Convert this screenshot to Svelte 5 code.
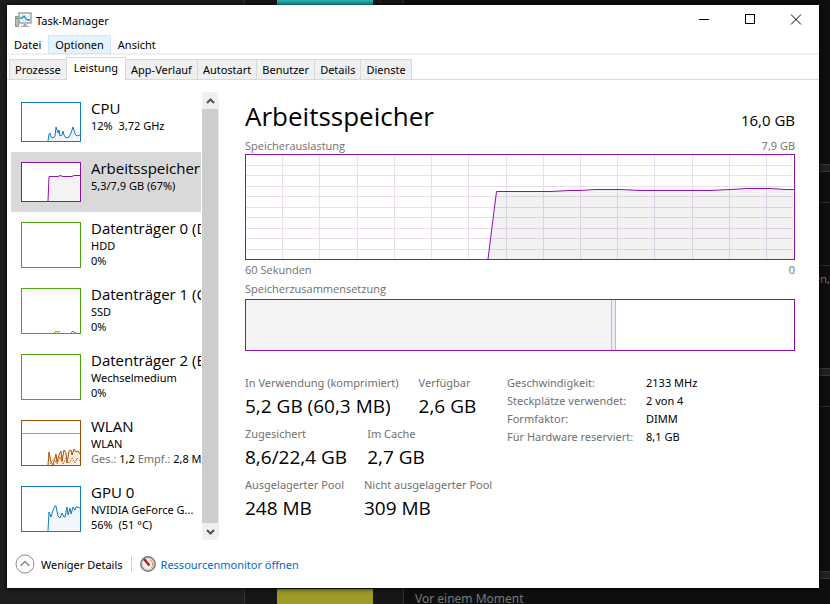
<script>
  const menus = ['Datei', 'Optionen', 'Ansicht'];
  const tabs = ['Prozesse', 'Leistung', 'App-Verlauf', 'Autostart', 'Benutzer', 'Details', 'Dienste'];
  let openMenu = $state('Optionen');
  let activeTab = $state('Leistung');
  let selected = $state('mem');

  const devices = [
    { id: 'cpu', name: 'CPU', lines: ['12%  3,72 GHz'], color: '#117dbb', fill: '#f1f6fa', h: 40,
      plot: 'M27 39L28 32L29 31L30 35L32 36L34 34L35 25L37 31L38 28L39 34L41 33L42 29L43 33L45 36L48 35L50 31L52 25L54 32L56 34L59 33' },
    { id: 'mem', name: 'Arbeitsspeicher', lines: ['5,3/7,9 GB (67%)'], color: '#8b12ae', fill: '#f4f2f4', h: 40,
      plot: 'M27 39L28 14.5H37L39 13.5L42 14.5H51L53 13.5H59' },
    { id: 'd0', name: 'Datenträger 0 (D:)', lines: ['HDD', '0%'], color: '#4da60c', fill: '#eff7e9', h: 46, plot: '' },
    { id: 'd1', name: 'Datenträger 1 (C:)', lines: ['SSD', '0%'], color: '#4da60c', fill: '#4da60c', h: 46,
      plot: 'M33 45L35 43L36 44H38L39 43M50 45L52 43L53 44L55 45' },
    { id: 'd2', name: 'Datenträger 2 (E:)', lines: ['Wechselmedium', '0%'], color: '#4da60c', fill: '#eff7e9', h: 46, plot: '' },
    { id: 'wlan', name: 'WLAN', lines: ['WLAN'], net: true, color: '#a74f01', fill: '#fdf1e9', h: 46,
      plot: 'M27 45L28 32L30 42L32 45L35 34L36 42L38 35L40 31L41 41L43 30L45 33L46 43L48 31L50 30L51 35L53 29L55 32L57 31L59 34' },
    { id: 'gpu', name: 'GPU 0', lines: ['NVIDIA GeForce G...', '56%  (51 °C)'], color: '#117dbb', fill: '#f1f6fa', h: 46,
      plot: 'M27 45L28 26L30 31L32 24L34 20L35 20L37 30L39 32L41 27L43 31L44 31L46 21L47 29L49 22L50 28L52 21L54 24L55 21L57 21L59 22' }
  ];

  const rows = [
    [['In Verwendung (komprimiert)', '5,2 GB (60,3 MB)'], ['Verfügbar', '2,6 GB']],
    [['Zugesichert', '8,6/22,4 GB'], ['Im Cache', '2,7 GB']],
    [['Ausgelagerter Pool', '248 MB'], ['Nicht ausgelagerter Pool', '309 MB']]
  ];
  const details = [
    ['Geschwindigkeit:', '2133 MHz'],
    ['Steckplätze verwendet:', '2 von 4'],
    ['Formfaktor:', 'DIMM'],
    ['Für Hardware reserviert:', '8,1 GB']
  ];
  const gridX = [37, 74, 112, 149, 186, 223, 261, 298, 335, 372, 409, 447, 484, 521];
  const gridY = [11, 21, 32, 42, 53, 63, 74, 84, 95];
</script>

<div class="desktop">
  <div class="backdrop" aria-hidden="true">
    <div class="pane"></div>
    <div class="swatch-column"><i class="teal"></i><i class="olive"></i></div>
    <div class="feed">
      <svg class="corner" width="10" height="5"><path d="M0 0L4 5" stroke="#333" /></svg>
      <span class="age">Vor einem Moment</span>
      <span class="cut">en,</span>
      <i class="band" style:top="164px"></i>
      <i class="rule" style:top="202px"></i>
      <i class="rule" style:top="265px"></i>
      <i class="band" style:top="368px"></i>
      <i class="rule" style:top="406px"></i>
      <i class="band" style:top="571px"></i>
    </div>
  </div>

  <div class="window">
    <header class="titlebar">
      <svg width="17" height="16" viewBox="0 0 17 16">
        <path d="M0.5 4.5H3.5V14.5H0.5Z" fill="#b9bdbf" stroke="#8e9295" />
        <path d="M1 6.5H3" stroke="#4fae3c" />
        <rect x="4" y="1" width="12" height="10" fill="#e9f4fa" stroke="#a2a6a8" stroke-width="1.5" />
        <path d="M5 6H7L9 4L11 7L13 8H15" fill="none" stroke="#1687c9" stroke-width="1.3" />
        <path d="M8.500 12H11.500V14H14V15H6V14H8.500Z" fill="#a2a6a8" />
      </svg>
      <h1>Task-Manager</h1>
      <div class="controls">
        <button aria-label="Minimieren"><svg width="12" height="12"><path d="M1 5.500H11" stroke="#000" /></svg></button>
        <button aria-label="Maximieren"><svg width="12" height="12"><rect x="1.5" y="0.5" width="9" height="9" fill="none" stroke="#000" /></svg></button>
        <button aria-label="Schließen"><svg width="12" height="12"><path d="M1 0.500L11 10.500M11 0.500L1 10.500" stroke="#000" /></svg></button>
      </div>
    </header>

    <nav class="menubar">
      {#each menus as m}
        <button class:open={openMenu === m} onclick={() => (openMenu = m)}>{m}</button>
      {/each}
    </nav>

    <div class="tabs" role="tablist">
      {#each tabs as t}
        <button role="tab" aria-selected={activeTab === t} class:active={activeTab === t} onclick={() => (activeTab = t)}>{t}</button>
      {/each}
    </div>

    <div class="body">
      <aside>
        <div class="devices">
          {#each devices as d}
            <button class="device" class:selected={selected === d.id} onclick={() => (selected = d.id)}>
              <svg class="thumb" width="60" height={d.h} viewBox="0 0 60 {d.h}">
                <rect x="0.5" y="0.5" width="59" height={d.h - 1} fill="#fff" />
                {#if d.plot}
                  {#if d.id !== 'd1'}<path d="{d.plot}V{d.h - 1}H27Z" fill={d.fill} />{/if}
                  <path d={d.plot} fill="none" stroke={d.color} />
                {/if}
                {#if d.net}
                  <path d="M1 13.500H59" stroke={d.color} opacity="0.6" />
                  <path d="M29 44L33 39L36 44L39 37L42 44L45 38L48 43L51 38L54 43L56 38L59 41" fill="none" stroke="#d9641c" stroke-dasharray="2 1" />
                {/if}
                <rect x="0.5" y="0.5" width="59" height={d.h - 1} fill="none" stroke={d.color} />
              </svg>
              <span class="info">
                <span class="name">{d.name}</span>
                {#each d.lines as l}<span class="line">{l}</span>{/each}
                {#if d.net}
                  <span class="line"><em>Ges.:</em> 1,2 <em>Empf.:</em> 2,8 MBit/s</span>
                {/if}
              </span>
            </button>
          {/each}
        </div>
        <div class="scrollbar">
          <button aria-label="Nach oben"><svg width="9" height="8"><path d="M1 6L4.500 2.500L8 6" /></svg></button>
          <div class="handle"></div>
          <button aria-label="Nach unten"><svg width="9" height="8"><path d="M1 2L4.500 5.500L8 2" /></svg></button>
        </div>
        <div class="splitter"></div>
      </aside>

      <main>
        <div class="head">
          <h2>Arbeitsspeicher</h2>
          <span>16,0 GB</span>
        </div>
        <div class="caption"><span>Speicherauslastung</span><span>7,9 GB</span></div>
        <svg class="chart" viewBox="0 0 550 106" preserveAspectRatio="none">
          <rect x="0" y="0" width="550" height="106" fill="#fff" />
          {#each gridX as x}<path d="M{x + 0.5} 1V105" stroke="#ecdcf2" />{/each}
          {#each gridY as y}<path d="M1 {y + 0.5}H548" stroke="#ecdcf2" />{/each}
          <path d="M243 105L251.500 37.500H305L325 36.500H335L350 35.500H375L395 36.500H465L485 35.500L503 34.500H525L540 35.500H549V105Z" fill="#000" fill-opacity="0.05" />
          <path d="M243 105L251.500 37.500H305L325 36.500H335L350 35.500H375L395 36.500H465L485 35.500L503 34.500H525L540 35.500H549" fill="none" stroke="#8b12ae" />
          <rect x="0.5" y="0.5" width="549" height="105" fill="none" stroke="#8b12ae" />
        </svg>
        <div class="caption"><span>60 Sekunden</span><span>0</span></div>
        <div class="caption second"><span>Speicherzusammensetzung</span></div>
        <div class="composition"><i class="used"></i><i class="modified"></i></div>

        <div class="stats">
          <div class="primary">
            {#each rows as r}
              <dl>
                {#each r as [k, v]}
                  <div><dt>{k}</dt><dd>{v}</dd></div>
                {/each}
              </dl>
            {/each}
          </div>
          <table>
            <tbody>
              {#each details as [k, v]}
                <tr><th scope="row">{k}</th><td>{v}</td></tr>
              {/each}
            </tbody>
          </table>
        </div>
      </main>
    </div>

    <footer>
      <button class="less">
        <svg width="20" height="20"><circle cx="10" cy="10" r="9" fill="#fff" stroke="#8c8c8c" /><path d="M5.500 12L10 7.500L14.500 12" fill="none" stroke="#8c8c8c" stroke-width="1.5" /></svg>
        Weniger Details
      </button>
      <a href="#resmon">
        <svg width="16" height="16" viewBox="0 0 16 16">
          <circle cx="8" cy="8" r="7.200" fill="#f3efe8" stroke="#777" stroke-width="1.500" />
          <circle cx="8" cy="8" r="5.500" fill="#fbfaf7" stroke="#c9c4bb" />
          <path d="M10 4A4.500 4.500 0 0 1 11 11.500" fill="none" stroke="#d98a5c" />
          <path d="M4 3L9.500 9.500" stroke="#c9141a" stroke-width="2.500" />
        </svg>
        Ressourcenmonitor öffnen
      </a>
    </footer>
  </div>
</div>

<style>
  :global(body) { margin: 0; background: #1f1f1f; }
  * { box-sizing: border-box; }
  .desktop {
    position: relative;
    display: flex;
    height: 100vh;
    padding: 5px 11px 16px 7px;
    overflow: hidden;
    font: 11px/15px "Noto Sans", "Open Sans", sans-serif;
    color: #000;
  }
  button { font: inherit; color: inherit; border: 0; padding: 0; margin: 0; background: none; }
  h1, h2, dl, dd { margin: 0; font-weight: 400; }

  .backdrop { position: absolute; inset: 0; display: flex; color: #777; }
  .pane { width: 245px; border-right: 1px solid #333; background: #1f1f1f; }
  .swatch-column { width: 158px; padding: 0 30px 0 32px; background: #171717; display: flex; flex-direction: column; justify-content: space-between; }
  .swatch-column i { height: 15px; }
  .teal { background: #2bb9b9; }
  .olive { background: #9c9c27; }
  .feed { position: relative; flex: 1; background: #0f0f0f; border-left: 1px solid #2b2b2b; }
  .corner { position: absolute; left: -25px; top: 0; }
  .age { position: absolute; left: 11px; bottom: -2px; font-size: 12px; }
  .cut { position: absolute; right: 0; top: 271px; }
  .band, .rule { position: absolute; right: 0; width: 11px; height: 1px; background: #2b2b2b; }
  .band { height: 8px; background: #222; border: solid #363636; border-width: 1px 0; }

  .window { position: relative; flex: 1; min-width: 0; display: flex; flex-direction: column; background: #fff; box-shadow: 0 0 6px #000; }
  .titlebar { display: flex; align-items: center; height: 30px; padding-left: 8px; gap: 4px; }
  h1 { flex: 1; font-size: 11px; }
  .controls { display: flex; height: 28px; }
  .controls button { width: 46px; display: grid; place-items: center; }
  .menubar { display: flex; height: 20px; border-bottom: 2px solid #f0f0f0; }
  .menubar button { height: 19px; padding: 0 6px; border: 1px solid transparent; }
  .menubar .open { background: #e5f3ff; border-color: #cce8ff; }
  .tabs { display: flex; align-items: flex-end; height: 25px; padding-left: 2px; border-bottom: 1px solid #d9d9d9; }
  .tabs button { height: 20px; padding: 0 5px; background: #f0f0f0; border: solid #d9d9d9; border-width: 1px 1px 0 0; }
  .tabs button:first-child { border-left-width: 1px; }
  .tabs .active { height: 23px; padding: 0 7px 3px; margin: 0 0 -1px -1px; border-left-width: 1px; background: #fff; }

  .body { flex: 1; min-height: 0; display: flex; padding-top: 12px; }
  aside { display: flex; width: 212px; padding-left: 4px; }
  .devices { width: 190px; overflow: hidden; }
  .device { display: flex; width: 100%; gap: 10px; padding: 6px 0 10px 10px; text-align: left; white-space: nowrap; overflow: hidden; }
  .selected { background: #d9d9d9; }
  .thumb { flex: none; margin-top: 4px; }
  .info { display: flex; flex-direction: column; white-space: pre; }
  .name { font: 15px/20px "Open Sans", sans-serif; }
  em { font-style: normal; color: #707070; }
  .scrollbar { display: flex; flex-direction: column; width: 16px; margin-left: 1px; background: #f0f0f0; }
  .scrollbar button { height: 17px; display: grid; place-items: center; }
  .scrollbar path { fill: none; stroke: #505050; stroke-width: 2; }
  .handle { flex: 1; background: #cdcdcd; }
  .splitter { width: 1px; margin: 10px 0 4px; background: #e8e8e8; }

  main { flex: 1; min-width: 0; padding: 4px 24px 0 26px; }
  .head { display: flex; justify-content: space-between; align-items: baseline; line-height: 40px; height: 42px; font-family: "Open Sans", sans-serif; }
  h2 { font-size: 26px; }
  .head span { font-size: 15px; }
  .caption { display: flex; justify-content: space-between; height: 16px; color: #707070; font-family: "Open Sans", sans-serif; }
  .chart { display: block; width: 100%; height: 106px; margin-bottom: 2px; }
  .second { margin-top: 3px; height: 18px; }
  .composition { display: flex; height: 52px; border: 1px solid #8b12ae; }
  .used { width: 66.6%; background: #f4f2f4; }
  .modified { width: 5px; background: #f1eaf4; border: solid #cfb0dc; border-width: 0 1px; }
  .stats { display: flex; align-items: flex-start; margin-top: 24px; }
  .primary { width: 262px; }
  dl { display: flex; gap: 20px; height: 51px; white-space: nowrap; }
  dt { color: #707070; line-height: 16px; }
  dd { font: 19px/30px "Open Sans", sans-serif; }
  table { border-collapse: collapse; white-space: nowrap; }
  tr { height: 18px; }
  th, td { padding: 0; font-weight: 400; text-align: left; line-height: 16px; vertical-align: top; }
  th { color: #707070; min-width: 139px; }

  footer { display: flex; align-items: center; height: 48px; padding-left: 8px; }
  footer button, footer a { display: flex; align-items: center; gap: 5px; }
  .less { gap: 6px; padding-right: 8px; }
  footer a { padding-left: 8px; color: #0066cc; text-decoration: none; border-left: 1px solid #d0d0d0; }
</style>
